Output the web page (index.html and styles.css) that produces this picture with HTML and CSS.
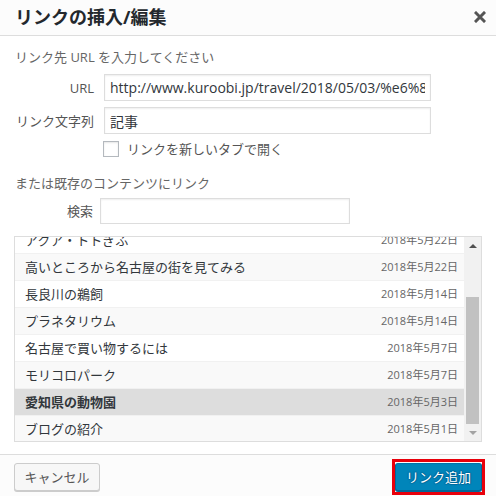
FILE: index.html
```html
<!DOCTYPE html>
<html lang="ja">
<head>
<meta charset="utf-8">
<title>リンクの挿入/編集</title>
<link rel="stylesheet" href="styles.css">
</head>
<body>
<div class="dialog">
  <header class="head">
    <h1 class="title">リンクの挿入/編集</h1>
    <button class="close" aria-label="閉じる">
      <svg width="12" height="12" viewBox="0 0 12 12"><path d="M2 2 L10 10 M10 2 L2 10" stroke="#555" stroke-width="3" stroke-linecap="square"/></svg>
    </button>
  </header>
  <main class="body">
    <p class="intro">リンク先 URL を入力してください</p>
    <div class="field first">
      <label class="lbl">URL</label>
      <input class="txt" type="text" value="http://www.kuroobi.jp/travel/2018/05/03/%e6%849%9b%e7%9f%a5">
    </div>
    <div class="field second">
      <label class="lbl">リンク文字列</label>
      <input class="txt" type="text" value="記事">
    </div>
    <label class="check"><input class="cb" type="checkbox"><span>リンクを新しいタブで開く</span></label>
    <p class="intro intro2">または既存のコンテンツにリンク</p>
    <div class="field search">
      <label class="lbl">検索</label>
      <input class="txt" type="text">
    </div>
    <div class="results">
      <div class="viewport">
        <ul class="list">
          <li class="item"><span class="name">アクア・トトぎふ</span><span class="date">2018年5月22日</span></li>
          <li class="item alt"><span class="name">高いところから名古屋の街を見てみる</span><span class="date">2018年5月22日</span></li>
          <li class="item"><span class="name">長良川の鵜飼</span><span class="date">2018年5月14日</span></li>
          <li class="item alt"><span class="name">プラネタリウム</span><span class="date">2018年5月14日</span></li>
          <li class="item"><span class="name">名古屋で買い物するには</span><span class="date">2018年5月7日</span></li>
          <li class="item alt"><span class="name">モリコロパーク</span><span class="date">2018年5月7日</span></li>
          <li class="item selected"><span class="name">愛知県の動物園</span><span class="date">2018年5月3日</span></li>
          <li class="item alt"><span class="name">ブログの紹介</span><span class="date">2018年5月1日</span></li>
        </ul>
      </div>
      <div class="scrollbar">
        <span class="arrow up"></span>
        <div class="track"><span class="thumb"></span></div>
        <span class="arrow down"></span>
      </div>
    </div>
  </main>
  <footer class="foot">
    <button class="btn">キャンセル</button>
    <span class="mark"><button class="btn primary">リンク追加</button></span>
  </footer>
</div>
</body>
</html>
```
FILE: styles.css
```css
* { box-sizing: border-box; }
html, body { margin: 0; padding: 0; }
body {
  width: 496px;
  height: 496px;
  background: #fff;
  font-family: "Open Sans", "Noto Sans CJK JP", sans-serif;
  font-size: 13px;
  color: #555;
  overflow: hidden;
}
.dialog {
  width: 496px;
  height: 496px;
  display: flex;
  flex-direction: column;
  background: #fff;
}
.head {
  height: 36px;
  flex: none;
  display: flex;
  align-items: center;
  justify-content: space-between;
  background: #fcfcfc;
  border-bottom: 1px solid #ddd;
  padding: 0 10px 0 15px;
}
.title {
  margin: 0;
  font-size: 18px;
  font-weight: bold;
  line-height: 35px;
  color: #23282d;
}
.close {
  border: 0;
  background: none;
  padding: 0;
  width: 12px;
  height: 12px;
  margin-top: -2px;
  display: flex;
}
.body {
  flex: 1;
  padding: 0 14px 12px;
  display: flex;
  flex-direction: column;
}
.intro {
  margin: 12px 0 0 1px;
  line-height: 18px;
  color: #666;
}
.intro2 { margin-top: 17px; }
.field {
  display: flex;
  align-items: center;
  height: 27px;
}
.field.first { margin-top: 8px; }
.field.second { margin-top: 6px; }
.lbl {
  width: 80px;
  margin-right: 10px;
  text-align: right;
  color: #555;
  line-height: 18px;
}
.txt {
  width: 327px;
  height: 27px;
  border: 1px solid #ddd;
  box-shadow: inset 0 1px 2px rgba(0,0,0,0.07);
  padding: 0 5px;
  font: 14px "Open Sans", "Noto Sans CJK JP", sans-serif;
  color: #32373c;
  background: #fff;
  outline: none;
}
.search { margin-top: 6px; height: 26px; }
.search .lbl { width: 79px; margin-right: 7px; }
.search .txt { width: 250px; height: 26px; }
.check {
  margin: 7px 0 0 89px;
  display: flex;
  align-items: center;
  height: 16px;
  line-height: 18px;
  color: #555;
}
.cb {
  -webkit-appearance: none;
  appearance: none;
  width: 16px;
  height: 16px;
  margin: 0 8px 0 0;
  border: 1px solid #b4b9be;
  background: #fff;
  box-shadow: inset 0 1px 2px rgba(0,0,0,0.1);
}
.results {
  margin-top: 12px;
  height: 206px;
  border: 1px solid #ddd;
  display: flex;
  background: #fff;
}
.viewport {
  flex: 1;
  overflow: hidden;
}
.list {
  list-style: none;
  margin: -10px 0 0;
  padding: 0;
}
.item {
  display: flex;
  justify-content: space-between;
  align-items: center;
  height: 27px;
  padding: 0 6px 0 10px;
  border-bottom: 1px solid #f1f1f1;
  background: #fff;
  color: #32373c;
  line-height: 18px;
}
.item.alt { background: #f9f9f9; }
.item.selected { background: #ddd; font-weight: bold; }
.date {
  font-size: 11px;
  color: #666;
  font-weight: normal;
}
.scrollbar {
  width: 17px;
  flex: none;
  display: flex;
  flex-direction: column;
  background: #f1f1f1;
}
.arrow {
  height: 17px;
  flex: none;
  display: flex;
  align-items: center;
  justify-content: center;
}
.arrow::before {
  content: "";
  border-left: 4px solid transparent;
  border-right: 4px solid transparent;
}
.arrow.up::before { border-bottom: 4px solid #505050; }
.arrow.down::before { border-top: 4px solid #a3a3a3; }
.track {
  flex: 1;
  display: flex;
  flex-direction: column;
  padding: 43px 2px 0;
}
.thumb {
  height: 127px;
  background: #c1c1c1;
}
.foot {
  flex: none;
  height: 42px;
  border-top: 1px solid #ddd;
  background: #fcfcfc;
  display: flex;
  justify-content: space-between;
  align-items: flex-start;
  padding: 8px 14px 0;
}
.btn {
  height: 28px;
  padding: 0 9px;
  font: 13px "Open Sans", "Noto Sans CJK JP", sans-serif;
  line-height: 26px;
  white-space: nowrap;
  color: #555;
  background: #f7f7f7;
  border: 1px solid #ccc;
  border-radius: 3px;
  box-shadow: 0 1px 0 #ccc;
  min-width: 86px;
}
.mark {
  display: flex;
  margin: -4px -3px 0 0;
  padding: 1px 0;
  border: 3px solid #e8000b;
}
.btn.primary {
  min-width: 87px;
  color: #fff;
  background: #0085ba;
  border-color: #0073aa #006799 #006799;
  box-shadow: 0 1px 0 #006799;
  text-shadow: 0 -1px 1px #006799, 1px 0 1px #006799, 0 1px 1px #006799, -1px 0 1px #006799;
}
```
